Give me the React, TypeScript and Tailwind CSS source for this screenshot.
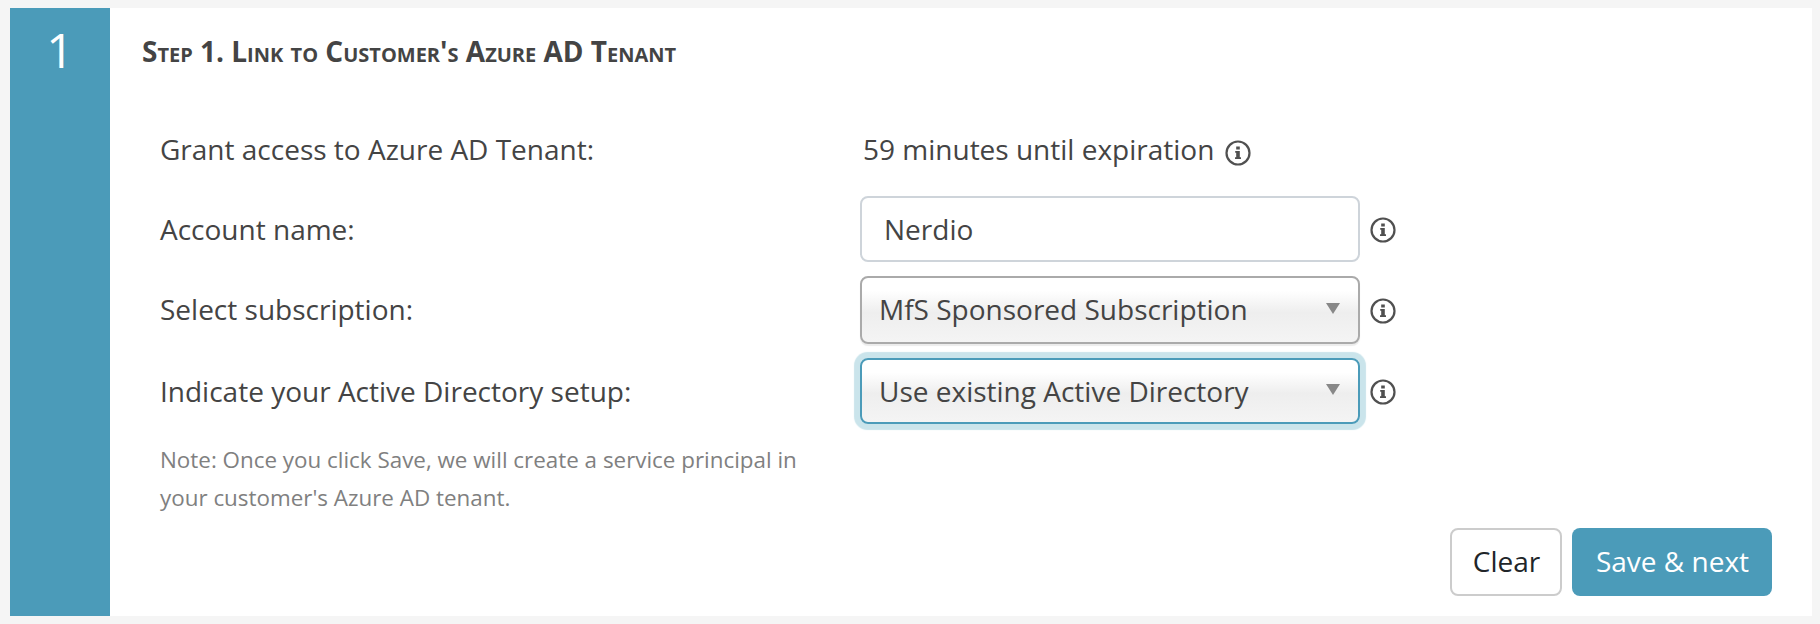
import type { ReactNode } from 'react'
import clsx from 'clsx'

function InfoIcon({ className }: { className?: string }) {
  return (
    <svg viewBox="0 0 26 26" className={clsx('h-[26px] w-[26px] shrink-0', className)} fill="none">
      <circle cx="13" cy="13" r="11.5" stroke="#505050" strokeWidth="2.2" />
      <path d="M11.2 6.5h3.6v3h-3.6zM10.2 11h4.6v6.2H16V19h-6v-1.8h1.2v-4.4h-1z" fill="#505050" />
    </svg>
  )
}

function Row({ label, className, children }: { label: ReactNode; className?: string; children: ReactNode }) {
  return (
    <div className={clsx('flex items-center', className)}>
      <div className="w-[700px] shrink-0">{label}</div>
      {children}
    </div>
  )
}

function Select({ value, focused }: { value: string; focused?: boolean }) {
  return (
    <div
      className={clsx(
        'flex w-[500px] items-center justify-between rounded-lg border-2 bg-linear-to-b from-white from-20% via-[#eee] via-54% to-[#f4f4f4] pr-[18px] pl-[17px]',
        focused
          ? 'h-[66px] border-[#4b9bb9] shadow-[0_0_1px_5.5px_#cae4eb]'
          : 'h-[68px] border-[#aaa] pb-[2px] shadow-[0_2px_1px_#ececec]',
      )}
    >
      <span>{value}</span>
      <svg viewBox="0 0 14 11" className={clsx('h-[11px] w-[14px]', focused ? 'mb-1' : 'mb-[2px]')}>
        <path d="M0 0h14L7 11z" fill="#888" />
      </svg>
    </div>
  )
}

export default function App() {
  return (
    <div className="h-[624px] w-[1820px] bg-[#f5f5f5] pt-2 pr-2 pb-2 pl-[10px] font-['Open_Sans',sans-serif] text-[28px] leading-[38px] text-[#444]">
      <div className="flex h-full bg-white">
        <div className="w-[100px] shrink-0 bg-[#4b9bb9] pt-[10px] text-center text-[48px] leading-[64px] text-white">
          1
        </div>

        <div className="flex flex-1 flex-col pr-10 pb-5 pl-8">
          <h2 className="mt-6 text-[28px] leading-[38px] font-bold [font-variant:small-caps]">
            Step 1. Link to Customer's Azure AD Tenant
          </h2>

          <div className="pl-[18px]">
            <Row label="Grant access to Azure AD Tenant:" className="mt-[60px] h-[38px]">
              <span className="pl-[3px]">59 minutes until expiration</span>
              <InfoIcon className="mt-[7px] ml-[11px]" />
            </Row>
            <Row label="Account name:" className="mt-7 h-[66px]">
              <div className="flex h-[66px] w-[500px] items-center rounded-lg border-2 border-[#ced4da] px-[22px]">
                Nerdio
              </div>
              <InfoIcon className="mt-[2px] ml-[10px]" />
            </Row>
            <Row label={<div className="pb-[2px]">Select subscription:</div>} className="mt-[14px] h-[68px]">
              <Select value="MfS Sponsored Subscription" />
              <InfoIcon className="mt-[2px] ml-[10px]" />
            </Row>
            <Row label="Indicate your Active Directory setup:" className="mt-[14px] h-[66px]">
              <Select value="Use existing Active Directory" focused />
              <InfoIcon className="mt-[2px] ml-[10px]" />
            </Row>
            <p className="mt-[17px] w-[660px] text-[22.4px] leading-[38px] text-[#808080]">
              Note: Once you click Save, we will create a service principal in
              <br />
              your customer's Azure AD tenant.
            </p>
          </div>

          <div className="mt-auto flex justify-end gap-[10px]">
            <button className="h-[68px] w-[112px] rounded-lg border-2 border-[#ccc] bg-white pb-[2px] pl-[1px] text-[#212529]">
              Clear
            </button>
            <button className="h-[68px] w-[200px] rounded-lg bg-[#4b9bb9] pb-[2px] pl-[1px] text-white">
              Save &amp; next
            </button>
          </div>
        </div>
      </div>
    </div>
  )
}
